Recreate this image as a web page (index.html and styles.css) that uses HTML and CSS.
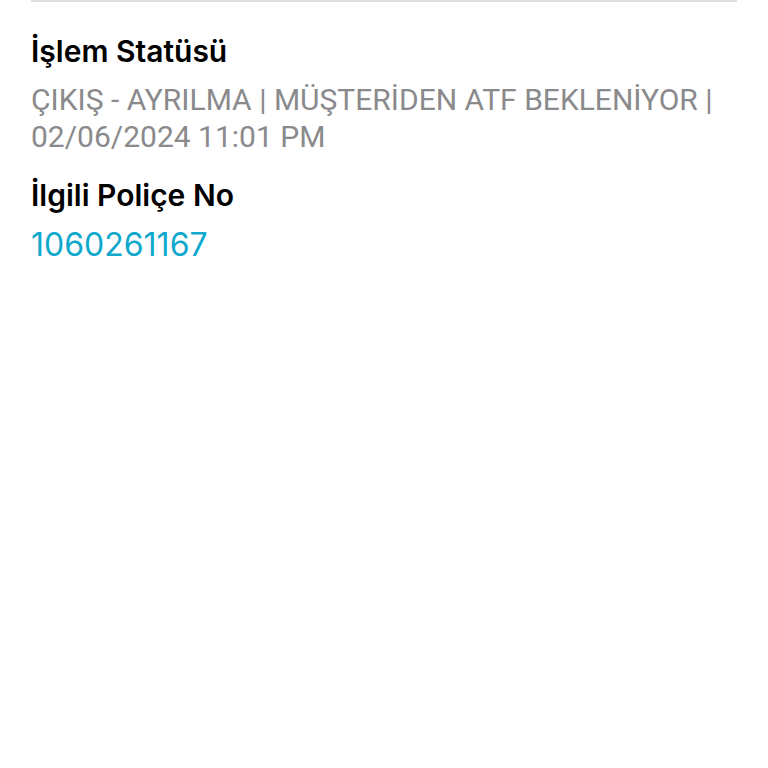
FILE: index.html
```html
<!DOCTYPE html>
<html lang="tr">
<head>
    <meta charset="UTF-8">
    <meta name="viewport" content="width=device-width, initial-scale=1.0">
    <title>İşlem Detayı</title>
    <link rel="stylesheet" href="styles.css">
</head>
<body>
    <main class="details">
        <section class="field">
            <h2 class="label">İşlem Statüsü</h2>
            <p class="value">ÇIKIŞ - AYRILMA | MÜŞTERİDEN ATF BEKLENİYOR | 02/06/2024 11:01 PM</p>
        </section>
        <section class="field">
            <h2 class="label">İlgili Poliçe No</h2>
            <p class="value"><a href="#" class="policy-link">1060261167</a></p>
        </section>
    </main>
</body>
</html>
```
FILE: styles.css
```css
body {
    font-family: Inter, 'Liberation Sans', sans-serif;
    background-color: #fff;
    margin: 0;
}

.details {
    margin: 0 31px;
    padding-top: 29px;
    border-top: 2px solid #dfdfdf;
}

.field {
    margin-bottom: 20px;
}

.label {
    color: #000;
    font-size: 30px;
    font-weight: 600;
    line-height: 40px;
    margin: 0 0 10px;
}

.value {
    color: #8a8a8c;
    font-family: Roboto, 'Liberation Sans', sans-serif;
    font-size: 30px;
    line-height: 37px;
    margin: 0;
}

.policy-link {
    display: inline-block;
    color: #0fa8cc;
    font-family: Inter, 'Liberation Sans', sans-serif;
    font-size: 32px;
    line-height: 40px;
    text-decoration: none;
}
```
